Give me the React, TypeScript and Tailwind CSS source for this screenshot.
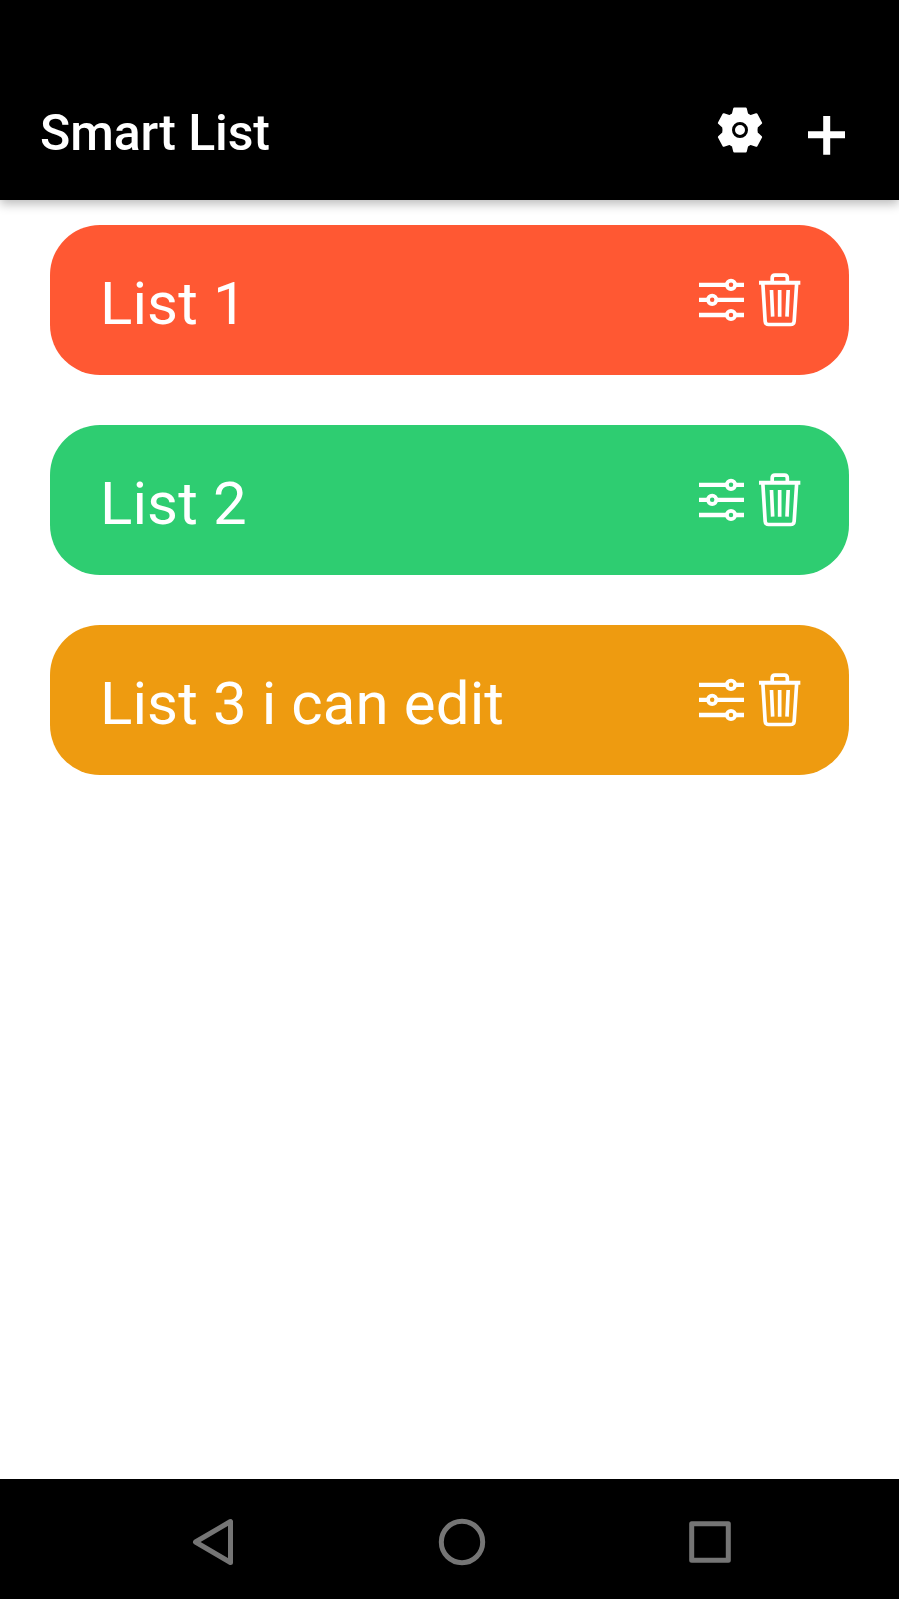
import React from "react";

type ListItem = { id: number; title: string; color: string };

const lists: ListItem[] = [
  { id: 1, title: "List 1", color: "bg-[#ff5833]" },
  { id: 2, title: "List 2", color: "bg-[#2ecd71]" },
  { id: 3, title: "List 3 i can edit", color: "bg-[#ee9b10]" },
];

function GearIcon() {
  return (
    <svg width="50" height="50" viewBox="-75 -75 150 150" fill="none">
      <path
        d="M-17 -64 H17 L21 -47 Q26 -44 31 -41 L49 -47 L63 -21 L50 -9 Q48 0 50 9 L63 21 L49 47 L31 41 Q26 44 21 47 L17 64 H-17 L-21 47 Q-26 44 -31 41 L-49 47 L-63 21 L-50 9 Q-48 0 -50 -9 L-63 -21 L-49 -47 L-31 -41 Q-26 -44 -21 -47 Z"
        fill="white"
        stroke="white"
        strokeWidth="7"
        strokeLinejoin="round"
      />
      <circle r="19.500" stroke="black" strokeWidth="9" />
    </svg>
  );
}

function PlusIcon() {
  return (
    <svg width="37" height="39" viewBox="0 0 37 39" fill="white">
      <path d="M15.2 0H22.2V15.3H37V22.2H22.2V38.8H15.2V22.2H0V15.3H15.2Z" />
    </svg>
  );
}

function SlidersIcon() {
  return (
    <svg width="50" height="50" viewBox="48 165 150 150" fill="none" stroke="white">
      <path
        d="M57 194.5H138M168 194.5H192M57 239.5H82M111 239.5H192M57 285H138M168 285H192"
        strokeWidth="13"
      />
      <g strokeWidth="11.500">
        <circle cx="153" cy="194.5" r="12.5" />
        <circle cx="96.5" cy="239.5" r="12.5" />
        <circle cx="153" cy="285" r="12.5" />
      </g>
    </svg>
  );
}

function TrashIcon() {
  return (
    <svg width="50" height="60" viewBox="222 150 150 180" fill="none" stroke="white">
      <path d="M237 188.5H361" strokeWidth="12" />
      <path
        d="M276.500 188V174Q276.500 165.500 285 165.500H313Q322 165.500 322 174V188"
        strokeWidth="11"
      />
      <path
        d="M248.500 190L255.500 304Q256.500 313.500 266 313.500H332Q341.500 313.500 342.500 304L350 190"
        strokeWidth="11"
      />
      <path d="M274.500 210L278 290M299 210V290M324.500 210L321 290" strokeWidth="11" />
    </svg>
  );
}

function ListCard({ item }: { item: ListItem }) {
  return (
    <li className={`flex h-[150px] items-center rounded-[50px] pr-[45px] pl-[50px] text-white ${item.color}`}>
      <span className="flex-1 pt-[7px] text-[60px] leading-[70px] tracking-[0.1px]">{item.title}</span>
      <div className="flex items-center gap-2">
        <button aria-label="Edit list"><SlidersIcon /></button>
        <button aria-label="Delete list"><TrashIcon /></button>
      </div>
    </li>
  );
}

export default function App() {
  return (
    <div className="flex h-[1599px] w-full flex-col bg-white font-['Roboto',sans-serif]">
      <header className="z-10 flex h-[200px] items-start bg-black pt-[104px] pr-[54px] pl-10 text-white shadow-[0_4px_10px_rgba(0,0,0,0.27)]">
        <h1 className="flex-1 text-[50px] leading-[58px] font-medium tracking-[-0.1px]">Smart List</h1>
        <button aria-label="Settings" className="mt-[1px]"><GearIcon /></button>
        <button aria-label="Add list" className="mt-3 ml-[43px]"><PlusIcon /></button>
      </header>

      <main className="flex-1 px-[50px] pt-[25px]">
        <ul className="flex flex-col gap-[50px]">
          {lists.map((item) => (
            <ListCard key={item.id} item={item} />
          ))}
        </ul>
      </main>

      <nav className="flex h-[120px] items-center bg-black pt-[6px] pl-[190px]">
        <button aria-label="Back">
          <svg width="46" height="50" viewBox="0 0 46 50" fill="none" stroke="#757575" strokeWidth="5" strokeLinejoin="round">
            <path d="M5.500 25L40.500 4.500V45.500Z" />
          </svg>
        </button>
        <button aria-label="Home" className="ml-[201px]">
          <svg width="50" height="50" viewBox="0 0 50 50" fill="none" stroke="#757575" strokeWidth="5">
            <circle cx="25" cy="25" r="20.700" />
          </svg>
        </button>
        <button aria-label="Recents" className="ml-[198px]">
          <svg width="50" height="50" viewBox="0 0 50 50" fill="none" stroke="#757575" strokeWidth="5" strokeLinejoin="round">
            <path d="M6.700 6.700H43.300V43.300H6.700Z" />
          </svg>
        </button>
      </nav>
    </div>
  );
}
